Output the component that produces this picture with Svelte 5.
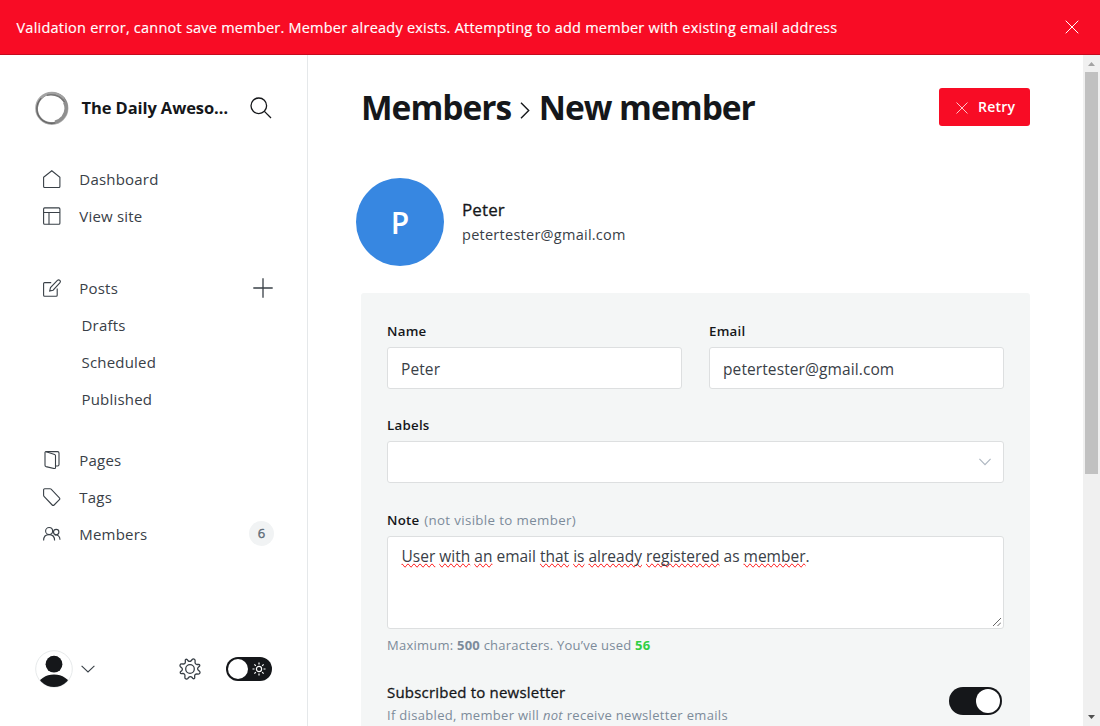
<script>
  const sub = ['Drafts', 'Scheduled', 'Published'];
  const note = [
    ['User', true], ['with', true], ['an', true], ['email', false], ['that', true], ['is', true],
    ['already', true], ['registered', true], ['as', false], ['member', true]
  ];
</script>

{#snippet icon(name)}
  <svg class="ico" viewBox="0 0 18 18" width="18" height="18">
    {#if name === 'home'}
      <path d="M.6 7.200 8.800.8l8.100 6.400v9.300a1 1 0 0 1-1 1H1.600a1 1 0 0 1-1-1z" />
    {:else if name === 'layout'}
      <rect x=".6" y=".9" width="16.300" height="16.300" rx="1" /><path d="M.6 5.500h16.300M6 5.500v11.700" />
    {:else if name === 'edit'}
      <path d="M8.2 3.6H1.600a1 1 0 0 0-1 1v11.700a1 1 0 0 0 1 1h11.600a1 1 0 0 0 1-1V9.400" />
      <path d="m10.100 11.200-3.400.9.800-3.500 6.900-7.200a1.700 1.700 0 0 1 2.400 0 1.700 1.700 0 0 1 0 2.400z" />
    {:else if name === 'pages'}
      <path d="M2.9.6h11.600c.9 0 1.500.6 1.500 1.500v11.500c0 .8-.6 1.400-1.400 1.400h-2.100" />
      <path d="M2 1.600v12.700c0 .6.4 1.100 1 1.300l8.200 2c.8.2 1.300-.3 1.300-1V4.800c0-.6-.3-1-.9-1.200L3.200.7C2.500.5 2 .9 2 1.600z" />
    {:else if name === 'tag'}
      <path d="M.6 1.800a1 1 0 0 1 1-1h5.500a1.500 1.500 0 0 1 1 .4l8.300 8.600a1.300 1.300 0 0 1 0 1.800l-5.300 5.400a1.300 1.300 0 0 1-1.900 0L1 8.300a1.500 1.500 0 0 1-.4-1z" />
    {:else if name === 'members'}
      <circle cx="6.100" cy="6" r="3.500" /><path d="M.6 15.500c0-3.500 2.200-5.900 5.500-5.900s5.500 2.400 5.500 5.900" />
      <circle cx="13.200" cy="7.100" r="2.700" /><path d="M11.700 10.300c3-.9 5.300 1.100 5.300 4.400" />
    {/if}
  </svg>
{/snippet}

{#snippet link(name, label)}
  <a class="row" href="#top">{@render icon(name)}<span>{label}</span></a>
{/snippet}

<div class="app">
  <header class="alert">
    <p>Validation error, cannot save member. Member already exists. Attempting to add member with existing email address</p>
    <svg viewBox="0 0 14 14" width="14" height="14"><path d="m.7.7 12.600 12.600M13.300.7.7 13.300" /></svg>
  </header>

  <div class="body">
    <nav class="side">
      <div class="brand">
        <svg class="logo" viewBox="0 0 34 34" width="34" height="34">
          <circle cx="16.800" cy="17.300" r="15.300" stroke="#aaa" stroke-width="2.600" />
          <ellipse cx="17.200" cy="17" rx="15.400" ry="14.200" transform="rotate(-40 17.200 17)" stroke="#8a8a8a" stroke-width="1.200" />
          <circle cx="16.500" cy="17.700" r="14.700" stroke="#666" stroke-width="1.200" />
          <path d="M29.500 11c2.500 5.500 2 10.500-1.500 15-2.200 2.700-4.800 4.300-8 5" stroke="#8f8f8f" stroke-width="3.200" />
          <path d="M6 7C12 1.200 22 .4 29 7.500" stroke="#a2a2a2" stroke-width="2.200" />
          <path d="M12 4.200c7-1.200 13.500 1 17.500 7" stroke="#777" stroke-width="1.500" />
        </svg>
        <strong>The Daily Aweso…</strong>
        <svg class="search" viewBox="0 0 22 22" width="22" height="22"><circle cx="8.800" cy="8.800" r="7.800" /><path d="m14.400 14.400 6.600 6.600" /></svg>
      </div>

      <div class="group first">
        {@render link('home', 'Dashboard')}
        {@render link('layout', 'View site')}
      </div>
      <div class="group posts">
        <div class="split">
          {@render link('edit', 'Posts')}
          <svg class="plus" viewBox="0 0 20 20" width="20" height="20"><path d="M10 .3v19.400M.3 10h19.400" /></svg>
        </div>
        {#each sub as s}<a class="row sub" href="#top">{s}</a>{/each}
      </div>
      <div class="group">
        {@render link('pages', 'Pages')}
        {@render link('tag', 'Tags')}
        <div class="split">{@render link('members', 'Members')}<span class="badge">6</span></div>
      </div>

      <div class="foot">
        <svg class="user" viewBox="0 0 38 38" width="38" height="38">
          <defs><clipPath id="face"><circle cx="19" cy="19" r="18" /></clipPath></defs>
          <circle cx="19" cy="19" r="18.300" fill="#fff" stroke="#e3e6e8" stroke-width=".9" />
          <g clip-path="url(#face)" fill="#15171a"><circle cx="19" cy="14.200" r="8.400" /><ellipse cx="19" cy="35" rx="15.500" ry="10.400" /></g>
        </svg>
        <svg class="caret" viewBox="0 0 14 8" width="14" height="8"><path d="m.6.8 6.400 6.200L13.400.8" /></svg>
        <svg class="gear" viewBox="0 0 24 24" width="24" height="24">
          <circle cx="12" cy="12" r="4.300" />
          <path transform="rotate(22.500 12 12)" d="m13.600 2.400.5 1.500a2 2 0 0 0 2.800 1.200l1.400-.7a1.100 1.100 0 0 1 1.400 1.400l-.7 1.400a2 2 0 0 0 1.200 2.800l1.500.5a1.600 1.600 0 0 1 0 3l-1.500.5a2 2 0 0 0-1.200 2.800l.7 1.400a1.100 1.100 0 0 1-1.400 1.400l-1.400-.7a2 2 0 0 0-2.800 1.200l-.5 1.500a1.700 1.700 0 0 1-3.200 0l-.5-1.500a2 2 0 0 0-2.800-1.200l-1.400.7a1.100 1.100 0 0 1-1.400-1.400l.7-1.400a2 2 0 0 0-1.200-2.800l-1.500-.5a1.600 1.600 0 0 1 0-3l1.500-.5A2 2 0 0 0 5 7.200l-.7-1.400a1.100 1.100 0 0 1 1.400-1.400l1.400.7a2 2 0 0 0 2.800-1.200l.5-1.500a1.700 1.700 0 0 1 3.200 0z" />
        </svg>
        <div class="theme">
          <i></i>
          <svg viewBox="0 0 14 14" width="14" height="14"><circle cx="7" cy="7" r="2.600" /><path d="M7 .5v2M7 11.500v2M.5 7h2M11.500 7h2M2.400 2.400l1.400 1.400M10.200 10.200l1.400 1.400M2.400 11.600l1.400-1.400M10.200 3.800l1.400-1.400" /></svg>
        </div>
      </div>
    </nav>

    <main>
      <div class="head">
        <h1>
          <span>Members</span>
          <svg viewBox="0 0 10 17" width="10" height="17"><path d="m1 .8 7.700 7.700L1 16.200" /></svg>
          <span>New member</span>
        </h1>
        <button class="retry"><svg viewBox="0 0 12 12" width="12" height="12"><path d="m.5.5 11 11M11.500.5l-11 11" /></svg><span>Retry</span></button>
      </div>

      <div class="profile">
        <div class="avatar">P</div>
        <div>
          <h3>Peter</h3>
          <p>petertester@gmail.com</p>
        </div>
      </div>

      <section class="card">
        <div class="cols">
          <div><div class="label">Name</div><div class="field">Peter</div></div>
          <div><div class="label">Email</div><div class="field">petertester@gmail.com</div></div>
        </div>
        <div class="label second">Labels</div>
        <div class="field select"><svg viewBox="0 0 12 8" width="12" height="8"><path d="m.4.8 5.600 5.800L11.600.8" /></svg></div>
        <div class="label third">Note <span>(not visible to member)</span></div>
        <div class="field area">
          <div>{#each note as [w, bad], i}{#if i > 0}{' '}{/if}<span class:bad>{w}</span>{/each}.</div>
          <svg viewBox="0 0 8 8" width="8" height="8"><path d="M0 8 8 0M4.500 8 8 4.500" /></svg>
        </div>
        <p class="hint">Maximum: <b>500</b> characters. You’ve used <b class="ok">56</b></p>
        <div class="news">
          <div>
            <h4>Subscribed to newsletter</h4>
            <p>If disabled, member will <em>not</em> receive newsletter emails</p>
          </div>
          <div class="switch"><i></i></div>
        </div>
      </section>
    </main>

    <div class="scroll">
      <svg viewBox="0 0 7 4" width="7" height="4"><path d="M3.500 0 7 4H0z" fill="#a3a3a3" /></svg>
      <div class="thumb"></div>
      <svg class="down" viewBox="0 0 7 4" width="7" height="4"><path d="M0 0h7L3.500 4z" fill="#505050" /></svg>
    </div>
  </div>
</div>

<style>
  :global(body) { margin: 0; overflow: hidden; }
  .app { width: 1100px; height: 726px; overflow: hidden; display: flex; flex-direction: column; background: #fff; color: #15171a; font-family: 'Open Sans', 'Noto Sans', sans-serif; }
  .app * { box-sizing: border-box; }
  p, h1, h3, h4 { margin: 0; }
  svg { fill: none; flex: none; display: block; }
  a { color: inherit; text-decoration: none; }

  .alert { flex: none; height: 55px; padding: 0 21px 0 16.500px; display: flex; align-items: center; justify-content: space-between; background: #f80c25; border-bottom: 1px solid #c50a1e; color: #fff; }
  .alert p { font-size: 14.500px; letter-spacing: .225px; white-space: nowrap; -webkit-text-stroke: .15px; }
  .alert svg { stroke: #fff; stroke-width: 1; }

  .body { flex: 1; min-height: 0; display: flex; }
  .side { flex: none; width: 308px; border-right: 1px solid #e5e8ea; padding: 36px 33px 38px 35px; display: flex; flex-direction: column; }
  .brand { height: 34px; display: flex; align-items: center; }
  .brand strong { flex: 1; margin-left: 12.500px; padding-bottom: 2px; font-size: 16.500px; letter-spacing: -.1px; white-space: nowrap; }
  .search { stroke: #15171a; stroke-width: 1.300; margin-right: 2px; }

  .group { margin-top: 24px; color: #394047; font-size: 15px; letter-spacing: .2px; }
  .group.first { margin-top: 35px; }
  .group.posts { margin-top: 35px; }
  .row { height: 37px; padding-left: 7.500px; display: flex; align-items: center; gap: 18.800px; }
  .row.sub { padding-left: 46.500px; }
  .ico { stroke: #394047; stroke-width: 1.100; }
  .split { display: flex; align-items: center; justify-content: space-between; }
  .plus { stroke: #394047; stroke-width: 1.300; margin-right: 1px; }
  .badge { width: 25px; height: 25px; border-radius: 50%; background: #f1f3f4; color: #5d6a76; font-size: 13px; letter-spacing: 0; line-height: 25px; text-align: center; -webkit-text-stroke: .35px; }

  .foot { margin-top: auto; height: 38px; display: flex; align-items: center; }
  .caret { stroke: #394047; stroke-width: 1.100; margin-left: 8px; }
  .gear { stroke: #394047; stroke-width: 1.300; margin-left: 83px; }
  .theme { margin-left: auto; width: 46px; height: 24px; border-radius: 12px; background: #15171a; padding: 0 6px 0 2px; margin-right: 2px; display: flex; align-items: center; justify-content: space-between; }
  .theme i { width: 20px; height: 20px; border-radius: 50%; background: #fff; }
  .theme svg { stroke: #fff; stroke-width: 1.200; }

  main { flex: 1; min-width: 0; padding: 33px 53px 0 53px; display: flex; flex-direction: column; }
  .head { height: 38px; display: flex; align-items: center; justify-content: space-between; }
  h1 { display: flex; align-items: center; font-size: 33.500px; font-weight: 700; letter-spacing: -1px; line-height: 38px; white-space: nowrap; }
  h1 span { padding-bottom: 1px; }
  h1 svg { stroke: #15171a; stroke-width: 1.400; margin: 7px 9px 0 8.500px; }
  .retry { width: 91px; height: 38px; border: 0; border-radius: 3px; background: #f80c25; color: #fff; font: 600 14px 'Open Sans', sans-serif; letter-spacing: .2px; padding: 0 0 0 16.500px; display: flex; align-items: center; gap: 10.500px; }
  .retry span { padding-bottom: 2px; }
  .retry svg { stroke: #fff; stroke-opacity: .75; stroke-width: 1; margin-top: 1px; }

  .profile { margin: 52px 0 0 -5px; display: flex; align-items: center; gap: 18px; }
  .avatar { width: 88px; height: 88px; border-radius: 50%; background: #3787e1; color: #fff; font-size: 30px; font-weight: 600; line-height: 90px; text-align: center; }
  h3 { font-size: 17px; font-weight: 400; letter-spacing: .1px; line-height: 25px; -webkit-text-stroke: .3px; }
  .profile p { font-size: 14.500px; letter-spacing: .26px; line-height: 25px; color: #394047; }

  .card { margin-top: 27px; flex: 1; min-height: 0; padding: 26px 26px 0; background: #f4f6f6; border-radius: 3px 3px 0 0; }
  .cols { display: grid; grid-template-columns: 1fr 1fr; gap: 27px; }
  .label { height: 24px; line-height: 24px; margin-bottom: 4px; font-size: 13.300px; font-weight: 600; letter-spacing: .25px; }
  .label span { font-weight: 400; color: #7c8b9a; letter-spacing: .36px; margin-left: 1px; }
  .field { height: 42px; background: #fff; border: 1px solid #dddfe0; border-radius: 3px; padding: 0 13px; font-size: 15.500px; line-height: 42px; letter-spacing: .1px; color: #394047; }
  .second { margin-top: 24px; }
  .select { display: flex; align-items: center; justify-content: flex-end; }
  .select svg { stroke: #aeb7c1; stroke-width: 1.200; margin-right: -.5px; }
  .third { margin-top: 25px; }
  .area { height: 93px; line-height: 24px; padding: 7px 2px 2px 13.500px; display: flex; flex-direction: column; justify-content: space-between; letter-spacing: 0; }
  .area svg { align-self: flex-end; stroke: #555; stroke-width: .9; }
  .bad { text-decoration-line: spelling-error; }
  .hint { margin-top: 4px; font-size: 13px; line-height: 24px; letter-spacing: .24px; color: #7c8b9a; }
  .ok { color: #30cf43; }
  .news { margin-top: 24px; display: flex; justify-content: space-between; }
  h4 { font-size: 15px; font-weight: 400; letter-spacing: .2px; line-height: 23px; -webkit-text-stroke: .3px; }
  .news p { font-size: 13px; line-height: 23px; letter-spacing: .32px; color: #7c8b9a; }
  .switch { width: 53px; height: 28px; margin: 6px 2px 0 0; border-radius: 14px; background: #15171a; padding: 2px; display: flex; justify-content: flex-end; }
  .switch i { width: 24px; height: 24px; border-radius: 50%; background: #fff; }

  .scroll { flex: none; width: 17px; background: #f0f0f0; padding: 7px 0 7px; display: flex; flex-direction: column; align-items: center; }
  .thumb { width: 13px; height: 402px; margin-top: 6px; background: #c1c1c1; }
  .down { margin-top: auto; }
</style>
